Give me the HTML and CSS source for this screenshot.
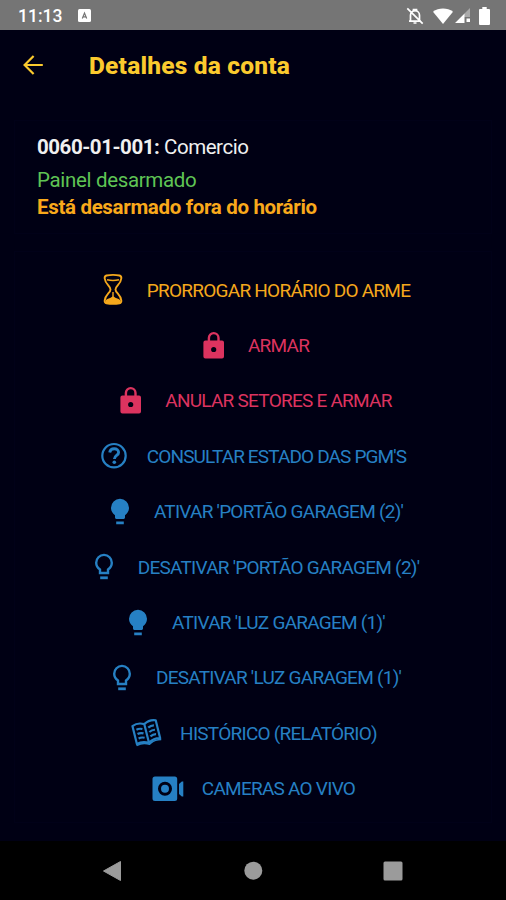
FILE: index.html
```
<!DOCTYPE html>
<html lang="pt-BR">
<head>
	<meta charset="utf-8">
	<title>Detalhes da conta</title>
	<link rel="stylesheet" href="styles.css">
</head>
<body>
	<!-- shared icons -->
	<svg class="defs">
		<symbol id="lock" viewBox="0 0 34 34">
			<path d="M11.9 13V8.9a4.8 4.8 0 0 1 9.6 0V13" fill="none" stroke="currentColor" stroke-width="2.4"/>
			<path fill="currentColor" fill-rule="evenodd" d="M8.4 11.5H25a2 2 0 0 1 2 2v14a2 2 0 0 1-2 2H8.4a2 2 0 0 1-2-2v-14a2 2 0 0 1 2-2zM16.7 17.9a2.6 2.6 0 1 0 0 5.2 2.6 2.6 0 0 0 0-5.2z"/>
		</symbol>
		<symbol id="bulb" viewBox="0 0 34 34">
			<path fill="currentColor" d="M17 3.8a9 9 0 0 1 9 9c0 3.1-1.5 5.7-4 7.4v2.4a1.3 1.3 0 0 1-1.3 1.3h-7.4a1.3 1.3 0 0 1-1.3-1.3v-2.4c-2.5-1.7-4-4.3-4-7.4a9 9 0 0 1 9-9zM13.2 26.4h7.6v2.8h-7.6z"/>
		</symbol>
		<symbol id="bulb-off" viewBox="0 0 34 34">
			<path fill="none" stroke="currentColor" stroke-width="2.4" d="M17 4.9a7.8 7.8 0 0 1 7.8 7.9c0 3-1.5 5.2-3.8 6.8v3.4h-8v-3.4c-2.3-1.6-3.8-3.8-3.8-6.8A7.8 7.8 0 0 1 17 4.9z"/>
			<path fill="currentColor" d="M13.2 26.4h7.6v2.8h-7.6z"/>
		</symbol>
	</svg>

	<div class="status">
		<span class="time">11:13</span>
		<svg class="app-icon" width="13" height="13" viewBox="0 0 13 13"><rect width="13" height="13" rx="1.5" fill="#fff"/><path d="M4.3 9.5l2.2-5.5 2.2 5.5M5.2 7.8h2.6" fill="none" stroke="#757575" stroke-width="1.2"/></svg>
		<svg class="bell" width="18" height="18" viewBox="0 0 18 18" fill="none" stroke="#fff" stroke-width="1.7"><path d="M4.5 14V8.2a4.5 4.5 0 0 1 9 0V14M3 14.2h12M1.3 1.3l15.4 15.4"/><path d="M7.5 2.5h3v1h-3zM7.5 16h3" /></svg>
		<svg class="wifi" width="20" height="16" viewBox="0 0 20 16"><path fill="#fff" d="M0 3.8C5.5-.6 14.5-.6 20 3.8L10 16z"/></svg>
		<svg class="signal" width="15" height="15" viewBox="0 0 15 15"><path fill="#aaa" d="M15 0v9H9V6z"/><path fill="#fff" d="M0 15L9.5 5.5V15zM11.5 10.5H15V14h-3.5z"/></svg>
		<svg width="11" height="18" viewBox="0 0 11 18"><path fill="#fff" d="M3.3 0h4.4v2H10a1 1 0 0 1 1 1v14a1 1 0 0 1-1 1H1a1 1 0 0 1-1-1V3a1 1 0 0 1 1-1h2.3z"/></svg>
	</div>

	<div class="header">
		<svg width="20" height="20" viewBox="0 0 20 20"><path d="M19.8 10H1.8M10.6 1L1.6 10l9 9" fill="none" stroke="currentColor" stroke-width="2.2"/></svg>
		<h1>Detalhes da conta</h1>
	</div>

	<div class="card info">
		<p class="account"><b>0060-01-001:</b> Comercio</p>
		<p class="state">Painel desarmado</p>
		<p class="warning">Está desarmado fora do horário</p>
	</div>

	<div class="card actions">
		<a class="action orange">
			<svg viewBox="0 0 34 34"><g fill="none" stroke="currentColor" stroke-width="1.9"><path d="M10.5 2.5Q17 1.2 23.5 2.5c1.600.4 2 1.500 1.800 3-.6 6-5.800 7.500-5.800 10.900s5.200 5 5.800 11c.2 1.600-.2 2.500-1.800 2.900q-6.500 1.200-13 0c-1.600-.4-2-1.300-1.800-2.900.6-6 5.800-7.600 5.800-11S9.300 11.500 8.700 5.500c-.2-1.500.2-2.600 1.800-3z"/><path d="M11 6.700Q17 8.300 23 6.700" stroke-width="1.700"/></g><path fill="currentColor" d="M16.300 19h1.400v4.500c1.800 2 5.500 2 6.800 4v2.700q-7.500 1.500-15 0v-2.700c1.300-2 5-2 6.800-4z"/></svg>
			<span>PRORROGAR HORÁRIO DO ARME</span>
		</a>
		<a class="action red"><svg><use href="#lock"/></svg><span>ARMAR</span></a>
		<a class="action red"><svg><use href="#lock"/></svg><span>ANULAR SETORES E ARMAR</span></a>
		<a class="action help">
			<svg viewBox="0 0 28 34"><g fill="none" stroke="currentColor"><circle cx="14" cy="16.7" r="11.7" stroke-width="2.2"/><path d="M9.700 13.500c.4-2.400 2-3.700 4.500-3.700 2.600 0 4.400 1.500 4.400 3.600 0 3-4.200 3.100-4.200 6.500" stroke-width="2.9"/></g><circle cx="14.3" cy="23.2" r="1.8" fill="currentColor"/></svg>
			<span>CONSULTAR ESTADO DAS PGM'S</span>
		</a>
		<a class="action"><svg><use href="#bulb"/></svg><span>ATIVAR 'PORTÃO GARAGEM (2)'</span></a>
		<a class="action"><svg><use href="#bulb-off"/></svg><span>DESATIVAR 'PORTÃO GARAGEM (2)'</span></a>
		<a class="action"><svg><use href="#bulb"/></svg><span>ATIVAR 'LUZ GARAGEM (1)'</span></a>
		<a class="action"><svg><use href="#bulb-off"/></svg><span>DESATIVAR 'LUZ GARAGEM (1)'</span></a>
		<a class="action">
			<svg viewBox="0 0 34 34"><g transform="rotate(-14 17 17)" fill="none" stroke="currentColor" stroke-width="2.2" stroke-linejoin="round"><path d="M17.500 8Q11.500 4.500 5.500 7v18.500q6-1.800 12 1.800 6-3.600 12-1.800V7q-6-2.500-12 1zV27"/><path d="M4.800 27q6-1.500 10.700.8l2 1 2-1q4.700-2.300 10.700-.8" stroke-width="1.5"/><path d="M8.500 11.500q3-.8 6 .8M8.500 16q3-.8 6 .8M8.500 20.500q3-.8 6 .8M20.500 12.300q3-1.600 6-.8M20.500 16.800q3-1.600 6-.8M20.500 21.300q3-1.600 6-.8"/></g></svg>
			<span>HISTÓRICO (RELATÓRIO)</span>
		</a>
		<a class="action">
			<svg viewBox="0 0 34 34"><path fill="currentColor" fill-rule="evenodd" d="M4 4.500h19.700a2.500 2.500 0 0 1 2.500 2.500v19.500a2.500 2.500 0 0 1-2.500 2.500H4a2.500 2.500 0 0 1-2.500-2.500V7A2.500 2.500 0 0 1 4 4.500zM14 9.800a7 7 0 1 0 0 14 7 7 0 0 0 0-14zM28 12l2.800-2.500h1.500V24.500h-1.500L28 22z"/><circle cx="14" cy="16.8" r="4" fill="currentColor"/></svg>
			<span>CAMERAS AO VIVO</span>
		</a>
	</div>

	<div class="navbar">
		<svg viewBox="0 0 20 22"><path d="M18.5 1.5v19L1.5 11z" fill="currentColor" stroke="currentColor" stroke-linejoin="round"/></svg>
		<svg viewBox="0 0 20 22"><circle cx="10.3" cy="10.7" r="9" fill="currentColor"/></svg>
		<svg viewBox="0 0 20 22"><rect x=".5" y="1.5" width="19" height="19" rx="1.5" fill="currentColor"/></svg>
	</div>
</body>
</html>
```
FILE: styles.css
```
*{
	box-sizing: border-box;
}
body{
	margin: 0;
	height: 900px;
	display: flex;
	flex-direction: column;
	background: #000014;
	font-family: Roboto, sans-serif;
	color: #f0f0f0;
	overflow: hidden;
}
svg{
	flex: none;
	display: block;
}
.defs{
	display: none;
}
.status{
	height: 30px;
	padding: 1px 16px 0 18px;
	display: flex;
	align-items: center;
	background: #757575;
	color: #fff;
}
.time{
	width: 60px;
	font-size: 17.5px;
	font-weight: 500;
}
.bell{
	margin-left: auto;
	margin-right: 9px;
}
.wifi{
	margin-right: 2px;
}
.signal{
	margin-right: 9px;
}
.header{
	height: 70px;
	padding-left: 23px;
	display: flex;
	align-items: center;
	gap: 46px;
	color: #fbca2e;
}
h1{
	margin: 0;
	font-size: 24.5px;
	font-weight: 800;
	letter-spacing: .2px;
}
.card{
	margin: 0 14px;
	border: 1px solid #010118;
}
.info{
	height: 114px;
	margin-top: 20px;
	padding: 13px 22px;
	font-size: 20.5px;
	line-height: 27px;
	letter-spacing: -.33px;
}
.info p{
	margin: 0;
	white-space: nowrap;
}
.info .account{
	margin-bottom: 6px;
	letter-spacing: -.45px;
}
.state{
	color: #5fc454;
}
.warning{
	color: #f9a91b;
	font-weight: 700;
}
.actions{
	height: 572px;
	margin-top: 17px;
	padding-top: 10.5px;
}
.action{
	height: 55.4px;
	display: flex;
	align-items: center;
	justify-content: center;
	gap: 17px;
	color: #2680c4;
	font-size: 19px;
	letter-spacing: -.75px;
	white-space: nowrap;
}
.action svg{
	width: 34px;
	height: 34px;
}
.action.help{
	gap: 19px;
	letter-spacing: -.86px;
}
.action.help svg{
	width: 28px;
}
.action.orange{
	color: #f5a81c;
}
.action.red{
	color: #dc335f;
}
.navbar{
	height: 59px;
	margin-top: auto;
	padding: 0 103px 0 102px;
	display: flex;
	align-items: center;
	justify-content: space-between;
	background: #000;
	color: #9b9b9b;
}
.navbar svg{
	width: 20px;
	height: 22px;
}
```
